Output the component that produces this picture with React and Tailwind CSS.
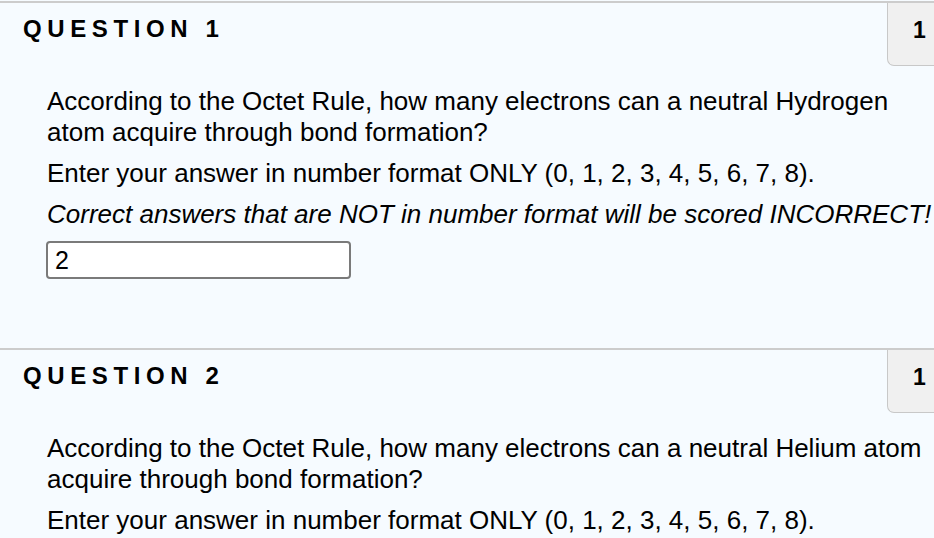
import React from "react";

const questions = [
  {
    id: 1,
    points: 1,
    text: "According to the Octet Rule, how many electrons can a neutral Hydrogen atom acquire through bond formation?",
    answer: "2",
  },
  {
    id: 2,
    points: 1,
    text: "According to the Octet Rule, how many electrons can a neutral Helium atom acquire through bond formation?",
    answer: "",
  },
];

function Question({ q }) {
  return (
    <div className="border-t-2 border-[#cccccc] pb-[69px]">
      <div className="flex items-start">
        <h2 className="ml-[23px] pt-[11px] text-[24px] leading-[30px] font-bold tracking-[5.6px] text-black">
          QUESTION {q.id}
        </h2>
        <div className="ml-auto w-[73px] h-[63px] bg-[#f0f0f0] border-l border-b border-[#c8c8c8] rounded-bl-[7px] pl-[25px] pt-[12px] text-[23px] leading-[30px] font-bold text-black">
          {q.points}
        </div>
      </div>
      <div className="mt-[20px] pl-[47px] w-[950px] text-[26px] leading-[31px] text-black">
        <p>{q.text}</p>
        <p className="mt-[10px]">
          Enter your answer in number format ONLY (0, 1, 2, 3, 4, 5, 6, 7, 8).
        </p>
        <p className="mt-[10px] italic">
          Correct answers that are NOT in number format will be scored INCORRECT!
        </p>
        <input
          type="text"
          defaultValue={q.answer}
          className="mt-[11px] block w-[305px] h-[38px] -ml-px bg-white border-2 border-[#7a7a7a] rounded-[4px] px-[7px] text-[25px] text-black outline-none"
          style={{ fontFamily: "'Liberation Sans', Arial, sans-serif" }}
        />
      </div>
    </div>
  );
}

export default function App() {
  return (
    <div
      className="w-[934px] h-[538px] overflow-hidden bg-[#f6fbff] pt-px"
      style={{ fontFamily: "'Liberation Sans', Arial, sans-serif" }}
    >
      <div className="w-[960px]">
        {questions.map((q) => (
          <Question key={q.id} q={q} />
        ))}
      </div>
    </div>
  );
}
